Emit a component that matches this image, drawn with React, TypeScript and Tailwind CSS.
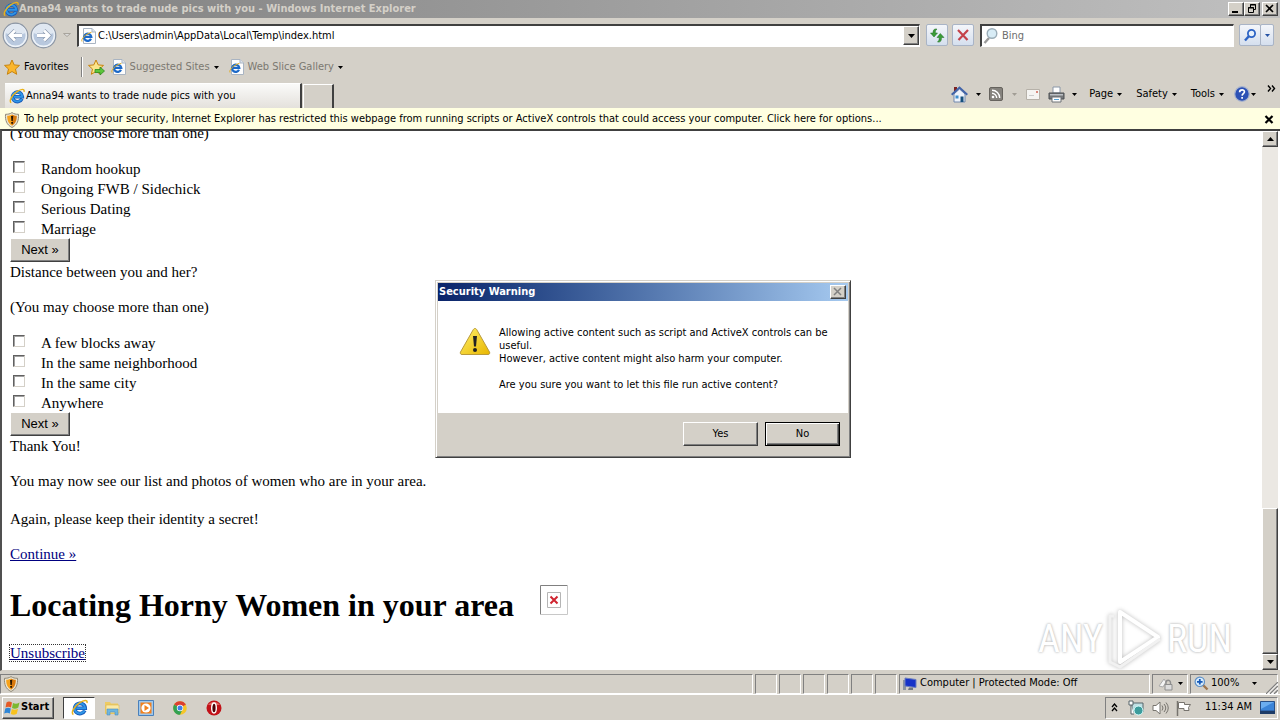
import React from "react";

const UI = "font-['DejaVu_Sans_Condensed','DejaVu_Sans',sans-serif]";
const RAISED =
  "border border-t-white border-l-white border-r-[#404040] border-b-[#404040] bg-[#d4d0c8] shadow-[inset_-1px_-1px_0_#808080]";
const SUNKEN = "border border-t-[#808080] border-l-[#808080] border-r-white border-b-white";

function IeLogo({ size }: { size: number }) {
  return (
    <svg width={size} height={size} viewBox="0 0 16 16" className="shrink-0" aria-hidden="true">
      <path d="M13 10.800A5 4.800 0 1 1 13.400 8.700H4.600" fill="none" stroke="#1659b8" strokeWidth="3.400" />
      <path d="M12.800 10.900A5 4.800 0 1 1 13.300 8.700H5" fill="none" stroke="#2f95e6" strokeWidth="2" />
      <path d="M2.300 14.600C-.6 13.400 3.100 6.800 8 3.600 12.200.9 15.800.3 15 3.800" fill="none" stroke="#e9b21a" strokeWidth="1.400" />
    </svg>
  );
}

function IePage() {
  return (
    <svg width="16" height="16" viewBox="0 0 16 16" className="shrink-0" aria-hidden="true">
      <path d="M2.500.5H11l3.500 3.500v11.500h-12z" fill="#fdfdfd" stroke="#a9b4c2" />
      <path d="M11 .5V4h3.500" fill="#dde5ee" stroke="#a9b4c2" />
      <path d="M10 10.800A3.600 3.600 0 1 1 10.300 8.900H3.700" fill="none" stroke="#1c69c8" strokeWidth="2.200" />
      <path d="M1 13.500C-.3 11.500 4 6 10.500 4.300" fill="none" stroke="#e2ae22" strokeWidth="1" />
    </svg>
  );
}

function Shield() {
  return (
    <svg width="16" height="16" viewBox="0 0 16 16" className="shrink-0" aria-hidden="true">
      <path d="M8 .6C6 2 4 2.300 1.500 2.300c-.3 6 1 10.500 6.500 13.200 5.500-2.700 6.800-7.200 6.500-13.200C12 2.300 10 2 8 .6z" fill="#ece6d4" stroke="#8f8877" />
      <path d="M8 2.500C6.500 3.500 5 3.800 3.200 3.800c0 4.500 1 7.800 4.800 9.900z" fill="#f6a21b" />
      <path d="M8 2.500c1.500 1 3 1.300 4.800 1.300 0 4.500-1 7.800-4.800 9.900z" fill="#d9790c" />
      <path d="M7 4h2.200l-.4 5H7.400zM7.200 10h1.800v1.800H7.200z" fill="#2a1600" />
    </svg>
  );
}

function Star({ arrow = false }: { arrow?: boolean }) {
  return (
    <svg width="17" height="17" viewBox="0 0 17 17" className="shrink-0" aria-hidden="true">
      <path d="M8 1l2.200 4.900 5.300.5-4 3.600 1.200 5.300L8 12.500l-4.700 2.800L4.500 10l-4-3.600 5.300-.5z" fill={arrow ? "#fbe58a" : "#fbb62c"} stroke="#c8840e" strokeWidth="1" />
      {arrow && <path d="M7 10.500h5V8l4.500 4-4.500 4v-2.500H7z" fill="#5cc53b" stroke="#2c8a1e" strokeWidth=".8" />}
    </svg>
  );
}

function Caret({ color = "#000" }: { color?: string }) {
  return (
    <svg width="5" height="3" viewBox="0 0 5 3" className="shrink-0" aria-hidden="true">
      <path d="M0 0h5L2.500 3z" fill={color} />
    </svg>
  );
}

function RoundArrow({ forward = false }: { forward?: boolean }) {
  return (
    <button aria-label={forward ? "Forward" : "Back"} className="h-[27px] w-[27px]">
      <svg width="27" height="27" viewBox="0 0 27 27" aria-hidden="true">
        <circle cx="13.500" cy="13.500" r="12.300" fill="#c9d3e2" stroke="#8d97a5" strokeWidth="1.200" />
        <circle cx="13.500" cy="13.500" r="10.800" fill="#b8c8de" stroke="#edf2f8" strokeWidth="1.400" />
        <path d="M3.500 11a10 9 0 0 1 20 0c-5 2.500-15 2.500-20 0z" fill="#dfe7f1" />
        <path
          d={forward ? "M7 13.500h12M14 8.500l5 5-5 5" : "M20 13.500H8M13 8.500l-5 5 5 5"}
          fill="none" stroke="#8796ad" strokeWidth="4" />
        <path
          d={forward ? "M7 13.500h12M14 8.500l5 5-5 5" : "M20 13.500H8M13 8.500l-5 5 5 5"}
          fill="none" stroke="#fff" strokeWidth="2.800" />
      </svg>
    </button>
  );
}

function TitleBar() {
  return (
    <header className="flex h-[18px] shrink-0 items-center bg-linear-to-r from-[#808080] to-[#c0c0c0] pl-[3px] pr-[2px]">
      <IeLogo size={16} />
      <h1 className="flex-1 truncate text-[11px] font-bold text-[#d4d0c8]">Anna94 wants to trade nude pics with you - Windows Internet Explorer</h1>
      <button aria-label="Minimize" className={`${RAISED} h-[14px] w-4`}>
        <svg width="14" height="12" viewBox="0 0 14 12"><path d="M3 8h6v2H3z" /></svg>
      </button>
      <button aria-label="Restore" className={`${RAISED} mr-[2px] h-[14px] w-4`}>
        <svg width="14" height="12" viewBox="0 0 14 12"><path d="M5.500 4V1.500h5v5H8M5 2h6M3.500 4.500h5v5h-5zM3 5h6" fill="none" stroke="#000" /></svg>
      </button>
      <button aria-label="Close" className={`${RAISED} h-[14px] w-4`}>
        <svg width="14" height="12" viewBox="0 0 14 12"><path d="M3 2l7 7M10 2L3 9" stroke="#000" strokeWidth="1.600" /></svg>
      </button>
    </header>
  );
}

const SOFT = "flex h-[22px] items-center justify-center rounded-[2px] border border-[#a9b4c6] bg-linear-to-b from-[#f4f6fa] to-[#d5dfee]";

function NavBar() {
  return (
    <div className="flex h-[34px] shrink-0 items-center pl-[2px] pr-[6px]">
      <div className="flex gap-px">
        <RoundArrow />
        <RoundArrow forward />
      </div>
      <button aria-label="Recent pages" className="flex w-5 justify-center"><svg width="8" height="4" viewBox="0 0 8 4"><path d="M.5.5h7L4 3.500z" fill="#ddd" stroke="#a8a49c" /></svg></button>
      <div className="flex h-[23px] flex-1 items-center border-t-2 border-l-2 border-r border-b border-t-[#404040] border-l-[#404040] border-r-white border-b-white bg-white">
        <span className="flex w-[19px] justify-center"><IePage /></span>
        <input aria-label="Address" readOnly value="C:\Users\admin\AppData\Local\Temp\index.html" className="min-w-0 flex-1 bg-transparent pt-[2px] text-[11px] outline-none" />
        <button aria-label="Show address history" className={`${RAISED} flex h-[19px] w-4 items-center justify-center`}>
          <svg width="7" height="4" viewBox="0 0 7 4"><path d="M0 0h7L3.500 4z" /></svg>
        </button>
      </div>
      <button aria-label="Refresh" className={`${SOFT} ml-[6px] w-[22px]`}>
        <svg width="16" height="16" viewBox="0 0 16 16"><path d="M8 2C5 1.500 4 3 4 6H1.500L5 10l3.500-4H6.300C6.300 4 6.500 3.500 8 2z" fill="#3b9c37" stroke="#1f6d24" strokeWidth=".5" /><path d="M8.500 15c3 .5 4-1 4-4.500H15L11.300 6.500 8 10.500h2.200c0 2.500-.2 3-1.700 4.500z" fill="#3b9c37" stroke="#1f6d24" strokeWidth=".5" /></svg>
      </button>
      <button aria-label="Stop" className={`${SOFT} ml-1 w-[22px]`}>
        <svg width="14" height="14" viewBox="0 0 14 14"><path d="M2 2l9.500 10M12 2L2.500 12" stroke="#c4424a" strokeWidth="2.200" /></svg>
      </button>
      <div className="ml-[6px] flex h-[23px] w-[254px] items-center border-t-2 border-l-2 border-r border-b border-t-[#404040] border-l-[#404040] border-r-white border-b-white bg-white">
        <svg width="18" height="18" viewBox="0 0 18 18" className="shrink-0"><path d="M7 11l-4.500 5" stroke="#9a9a9a" strokeWidth="2.400" /><circle cx="10" cy="6.500" r="4.800" fill="#d8ecf6" stroke="#9badb8" strokeWidth="1.400" /></svg>
        <input aria-label="Search" placeholder="Bing" className="min-w-0 flex-1 bg-transparent pt-[2px] pl-[2px] text-[11px] outline-none placeholder:text-[#6d6d6d]" />
      </div>
      <button aria-label="Go" className={`${SOFT} ml-[5px] w-[22px]`}>
        <svg width="14" height="14" viewBox="0 0 14 14"><path d="M6 8l-4 4.500" stroke="#2b62c4" strokeWidth="2.400" /><circle cx="8.500" cy="5.500" r="3.600" fill="#e6f0fb" stroke="#2b62c4" strokeWidth="1.800" /></svg>
      </button>
      <button aria-label="Search options" className={`${SOFT} -ml-px w-[14px]`}><Caret color="#2452a4" /></button>
    </div>
  );
}

function FavoritesBar() {
  return (
    <div className="flex h-[30px] shrink-0 items-center pl-1 text-[11px]">
      <button className="flex items-center gap-[3px]"><Star />Favorites</button>
      <span className="ml-3 mr-[5px] h-5 w-[2px] border-l border-[#808080] bg-white" />
      <button aria-label="Add to Favorites Bar" className="mr-[6px]"><Star arrow /></button>
      <button className="mr-[10px] flex items-center gap-[3px] text-[#7b7871]"><IePage />Suggested Sites<span className="ml-px"><Caret /></span></button>
      <button className="flex items-center gap-[3px] text-[#7b7871]"><IePage />Web Slice Gallery<span className="ml-px"><Caret /></span></button>
    </div>
  );
}

function CommandBar() {
  return (
    <div className="mb-[2px] flex h-6 items-center text-[11px]">
      <button aria-label="Home" className="flex items-center gap-2">
        <svg width="17" height="17" viewBox="0 0 17 17"><path d="M3 8v8h11V8L8.500 3z" fill="#eef3fb" stroke="#7187ad" /><path d="M3 1h3v4H3z" fill="#7d2222" /><path d="M.7 8.700L8.500 1.500l7.800 7.200" fill="none" stroke="#4163a9" strokeWidth="2" /><path d="M9.500 10.500h3V16h-3z" fill="#164f7d" /><path d="M4.500 9.500h3v3h-3z" fill="#3f8fce" /></svg>
        <Caret />
      </button>
      <button aria-label="Feeds" className="ml-2 flex items-center gap-[9px]">
        <svg width="14" height="14" viewBox="0 0 14 14"><rect x=".5" y=".5" width="13" height="13" rx="1.500" fill="#85827d" stroke="#66635e" /><circle cx="4" cy="10" r="1.300" fill="#fff" /><path d="M3 6.300A4.700 4.700 0 0 1 7.700 11M3 3.300A7.700 7.700 0 0 1 10.700 11" fill="none" stroke="#fff" strokeWidth="1.400" /></svg>
        <Caret color="#a19d95" />
      </button>
      <button aria-label="Read mail" className="ml-[9px]">
        <svg width="14" height="11" viewBox="0 0 14 11"><path d="M.5.5h13v10H.5z" fill="#f5f4f2" stroke="#b6b1a9" /><path d="M10 2h2v2h-2z" fill="#d9877c" /><path d="M3 6.500h5" stroke="#ccc" /></svg>
      </button>
      <button aria-label="Print" className="ml-2 flex items-center gap-[7px]">
        <svg width="17" height="17" viewBox="0 0 17 17"><path d="M5 1h7v6H5z" fill="#fff" stroke="#8a97a8" /><path d="M1 7h15v6H1z" fill="#76787b" stroke="#4b4e52" /><path d="M2 8h13v1.500H2z" fill="#bcc0c5" /><path d="M4 11h9v5H4z" fill="#fdfdfd" stroke="#6e7277" /><path d="M6 13.500h5" stroke="#58a3d4" /></svg>
        <Caret />
      </button>
      <button className="ml-3 flex items-center gap-1">Page<Caret /></button>
      <button className="ml-[14px] flex items-center gap-1">Safety<Caret /></button>
      <button className="ml-[14px] flex items-center gap-1">Tools<Caret /></button>
      <button aria-label="Help" className="ml-[10px] flex items-center gap-px">
        <svg width="16" height="16" viewBox="0 0 16 16"><circle cx="8" cy="8" r="7.300" fill="#2c51b5" stroke="#a9b4cd" strokeWidth="1.200" /><path d="M5.600 6.300C5.700 3 10.600 3.300 10.400 6c-.1 1.600-2.200 1.700-2.300 3.600M8.100 11v1.800" fill="none" stroke="#fff" strokeWidth="1.700" /></svg>
        <Caret />
      </button>
      <button aria-label="More commands" className="mb-3 ml-[11px]">
        <svg width="9" height="7" viewBox="0 0 9 7"><path d="M1 .5l2.500 3L1 6.500M5 .5l2.500 3L5 6.500" fill="none" stroke="#000" strokeWidth="1.400" /></svg>
      </button>
    </div>
  );
}

function TabRow() {
  return (
    <div className="flex h-[26px] shrink-0 items-end justify-between pl-[5px] pr-1">
      <div className="flex items-end">
        <button className="flex h-[25px] w-[297px] items-center gap-px border-t border-r-2 border-t-white border-r-[#404040] bg-linear-to-b from-[#fafaf9] to-[#e4e1dc] pl-1 text-left text-[11px]">
          <IeLogo size={16} />Anna94 wants to trade nude pics with you
        </button>
        <button aria-label="New tab" className="ml-px h-6 w-[31px] border-t border-r-2 border-l border-t-white border-r-[#404040] border-l-white" />
      </div>
      <CommandBar />
    </div>
  );
}

function InfoBar() {
  return (
    <div className="flex h-[21px] shrink-0 items-center gap-1 bg-[#ffffe1] pt-[2px] pl-1 pr-[6px] text-[11px]">
      <Shield />
      <button className="flex-1 truncate text-left">To help protect your security, Internet Explorer has restricted this webpage from running scripts or ActiveX controls that could access your computer. Click here for options...</button>
      <button aria-label="Close information bar"><svg width="10" height="9" viewBox="0 0 10 9"><path d="M1.500 1l7 7M8.500 1l-7 7" stroke="#000" strokeWidth="2.200" /></svg></button>
    </div>
  );
}

function Choices({ items }: { items: string[] }) {
  return (
    <div>
      {items.map((item) => (
        <label key={item} className="flex h-5 items-center">
          <input type="checkbox" className="mr-4 mb-[3px] ml-[3px] h-3 w-3 appearance-none border border-t-[#606060] border-l-[#606060] border-r-[#d4d0c8] border-b-[#d4d0c8] bg-white shadow-[inset_1px_1px_0_#a0a0a0]" />
          <span className="pt-[2px]">{item}</span>
        </label>
      ))}
      <button className={`${RAISED} block h-6 w-[60px] font-['Liberation_Sans',sans-serif] text-[13px] leading-[22px]`}>Next »</button>
    </div>
  );
}

function Watermark() {
  return (
    <div className="absolute right-[30px] bottom-0 flex items-center gap-[3px] font-['Liberation_Sans_Narrow','Roboto_Condensed','Liberation_Sans',sans-serif] text-[38px] leading-[60px] text-white [text-shadow:0_0_3px_#bbb,0_0_2px_#ccc]">
      <span>ANY</span>
      <svg width="58" height="62" viewBox="0 0 58 62" aria-hidden="true" className="drop-shadow-[0_0_2px_#bbb]">
        <path d="M14 4v50l38-25z" fill="none" stroke="#fff" strokeWidth="4" strokeLinejoin="round" />
        <path d="M8 8H4v46l10 5 40-28" fill="none" stroke="#f1f1f1" strokeWidth="3" strokeLinejoin="round" />
      </svg>
      <span>RUN</span>
    </div>
  );
}

function Document() {
  return (
    <div className="flex min-h-0 flex-1 border-t-2 border-l-2 border-b border-t-[#404040] border-l-[#505050] border-b-[#d4d0c8] bg-white pr-[2px]">
      <main className="relative flex min-w-0 flex-1 flex-col justify-end overflow-hidden pb-[7px] pl-2 font-['Liberation_Serif',serif] text-[15px] leading-[20px]">
        <p className="mb-[15px]">(You may choose more than one)</p>
        <Choices items={["Random hookup", "Ongoing FWB / Sidechick", "Serious Dating", "Marriage"]} />
        <p className="mb-[15px]">Distance between you and her?</p>
        <p className="mb-[15px]">(You may choose more than one)</p>
        <Choices items={["A few blocks away", "In the same neighborhood", "In the same city", "Anywhere"]} />
        <p className="mb-[15px]">Thank You!</p>
        <p className="mb-[18px]">You may now see our list and photos of women who are in your area.</p>
        <p className="mb-[15px]">Again, please keep their identity a secret!</p>
        <p className="mb-[21px]"><a href="#continue" className="text-[#000080] underline">Continue »</a></p>
        <h2 className="mb-[18px] flex h-10 items-center gap-[26px] text-[32px] font-bold">
          Locating Horny Women in your area
          <svg role="img" aria-label="Missing picture" width="28" height="30" viewBox="0 0 28 30" className="mb-[10px]">
            <path d="M.5 29.500V.5h27" fill="none" stroke="#808080" /><path d="M27.500.5v29H.5" fill="none" stroke="#c8c8c8" />
            <path d="M7.500 7.500h13v15h-13z" fill="#fff" stroke="#b5b5b5" /><path d="M10.500 11.500l7 7M17.500 11.500l-7 7" stroke="#d02530" strokeWidth="2" />
          </svg>
        </h2>
        <p><a href="#unsubscribe" className="text-[#000080] underline outline-1 outline-dotted outline-[#333]">Unsubscribe</a></p>
        <Watermark />
      </main>
      <div className="flex w-4 shrink-0 flex-col bg-[#ebe8e3]">
        <button aria-label="Scroll up" className={`${RAISED} flex h-4 w-4 items-center justify-center`}><svg width="7" height="4" viewBox="0 0 7 4"><path d="M0 4h7L3.500 0z" /></svg></button>
        <div className="flex-1" />
        <div className={`${RAISED} h-[146px]`} />
        <button aria-label="Scroll down" className={`${RAISED} flex h-4 w-4 items-center justify-center`}><svg width="7" height="4" viewBox="0 0 7 4"><path d="M0 0h7L3.500 4z" /></svg></button>
      </div>
    </div>
  );
}

function StatusBar() {
  return (
    <div className="flex h-[23px] shrink-0 items-center gap-[2px] pt-[2px] pr-[2px] text-[11px]">
      <div className={`${SUNKEN} flex h-5 flex-1 items-center pl-[2px]`}><Shield /></div>
      {[0, 1, 2, 3, 4, 5].map((n) => <div key={n} className={`${SUNKEN} h-5 w-[22px]`} />)}
      <div className={`${SUNKEN} flex h-5 w-[251px] items-center gap-[3px] pl-[2px]`}>
        <svg width="15" height="16" viewBox="0 0 15 16"><path d="M1 4h3v10H1z" fill="#8b949f" /><path d="M3 2l11 1.500v8L3 10z" fill="#1632c8" stroke="#6c7ec0" /><path d="M7 11.500h4V14H6z" fill="#707783" /></svg>
        Computer | Protected Mode: Off
      </div>
      <button aria-label="Security report" className={`${SUNKEN} flex h-5 w-9 items-center justify-center gap-1`}>
        <svg width="16" height="16" viewBox="0 0 16 16"><path d="M1 10L6 3l2 3-3 5z" fill="#f4f4f4" stroke="#aaa" /><path d="M8 8.500V6.500a2.200 2.200 0 0 1 4.500 0v2" fill="none" stroke="#8e8e8e" strokeWidth="1.400" /><path d="M7 8.500h7v5.500H7z" fill="#ddd" stroke="#8e8e8e" /></svg>
        <Caret />
      </button>
      <button className={`${SUNKEN} flex h-5 w-[88px] items-center gap-[2px] pl-[3px]`}>
        <svg width="15" height="15" viewBox="0 0 15 15"><path d="M8.500 8.500l5 5" stroke="#a0764d" strokeWidth="2.400" /><circle cx="5.800" cy="5.800" r="4.700" fill="#d8ecfc" stroke="#5f90c6" strokeWidth="1.200" /><path d="M5.800 3v5.600M3 5.800h5.600" stroke="#1659b8" strokeWidth="1.800" /></svg>
        <span className="flex-1 text-left">100%</span>
        <span className="flex pr-5"><Caret /></span>
      </button>
      <svg width="12" height="12" viewBox="0 0 12 12" className="-ml-[14px] self-end"><path d="M0 12L12 0M4 12l8-8M8 12l4-4" stroke="#808080" strokeWidth="1.300" /><path d="M1.500 12L12 1.500M5.500 12L12 5.500" stroke="#fff" /></svg>
    </div>
  );
}

function Taskbar() {
  return (
    <footer className="flex h-[26px] shrink-0 items-center border-t border-white pr-[2px] pl-[2px] text-[11px]">
      <button className={`${RAISED} flex h-[22px] w-[52px] items-center gap-px pl-px font-bold`}>
        <svg width="16" height="16" viewBox="0 0 16 16"><path d="M2.500 2.500C4.500 1 6 1.500 8 2.500L7 7.500C5 6.500 3.500 6.500 1.500 7.500z" fill="#e55a26" /><path d="M9 3c2 1 4 1 6.500-.5l-1.200 5C12 9 10 9 8 8z" fill="#7cb82f" /><path d="M1.300 8.500c2-1 3.500-1 5.500 0l-1 5C4 12.500 2.300 12.500.2 13.500z" fill="#2f86d6" /><path d="M7.800 9c2 1 4 1 6.200-.3l-1.200 5c-2 1.300-4 1.300-6 .3z" fill="#f8c21d" /></svg>
        Start
      </button>
      <div className="ml-[9px] flex items-center">
        <button aria-label="Internet Explorer" className="flex h-[22px] w-8 items-center justify-center border border-t-[#404040] border-l-[#404040] border-r-white border-b-white bg-white"><IeLogo size={17} /></button>
        <button aria-label="Windows Explorer" className="flex h-[22px] w-[34px] items-center justify-center">
          <svg width="16" height="16" viewBox="0 0 16 16"><path d="M1 2h5l1 1.500h7V14H1z" fill="#eecb63" /><path d="M2 5h13v8H2z" fill="#fbe9a4" stroke="#d9b652" strokeWidth=".6" /><path d="M3 9h11v6h-3v-3H6v3H3z" fill="#6fb6df" stroke="#4a8fc0" strokeWidth=".6" /></svg>
        </button>
        <button aria-label="Media Player" className="flex h-[22px] w-[34px] items-center justify-center">
          <svg width="16" height="16" viewBox="0 0 16 16"><path d="M.5.5h15v15H.5z" fill="#9fc8ec" stroke="#4a80bb" /><path d="M2.500 2.500h11v11h-11z" fill="#f2811d" /><circle cx="8" cy="8" r="4.600" fill="#fff" /><path d="M6.500 5l4.500 3-4.500 3z" fill="#f2811d" /></svg>
        </button>
        <button aria-label="Chrome" className="flex h-[22px] w-[34px] items-center justify-center">
          <svg width="14" height="14" viewBox="0 0 14 14"><circle cx="7" cy="7" r="6.800" fill="#f6c62a" /><path d="M7 7L1.100 3.600A6.800 6.800 0 0 1 12.900 3.600z" fill="#db3f31" /><path d="M7 7L1.100 3.600A6.800 6.800 0 0 0 7 13.800L9.500 8.500z" fill="#33a152" /><circle cx="7" cy="7" r="3.200" fill="#fff" /><circle cx="7" cy="7" r="2.500" fill="#3f7fe8" /></svg>
        </button>
        <button aria-label="Opera" className="flex h-[22px] w-[34px] items-center justify-center">
          <svg width="16" height="16" viewBox="0 0 16 16"><circle cx="8" cy="8" r="7.500" fill="#c21118" /><path d="M2 5a7 6 0 0 1 12 0z" fill="#e0605c" /><ellipse cx="8" cy="8" rx="2.300" ry="5" fill="#4d0206" stroke="#fff" strokeWidth="1.400" /></svg>
        </button>
      </div>
      <div className={`${SUNKEN} ml-auto flex h-[22px] items-center pr-[2px] pl-[5px]`}>
        <button aria-label="Show hidden icons"><svg width="7" height="9" viewBox="0 0 7 9"><path d="M1 4l2.500-3L6 4M1 8l2.500-3L6 8" fill="none" stroke="#000" strokeWidth="1.300" /></svg></button>
        <svg width="16" height="16" viewBox="0 0 16 16" className="ml-[10px]"><path d="M4 3h11v9H4z" fill="#bfe0e4" stroke="#56646b" /><circle cx="10.500" cy="10.500" r="4.500" fill="#3d9c9c" stroke="#dff" /><path d="M1 1h4v4H1zM3 5v9h3" fill="#fff" stroke="#56646b" /></svg>
        <svg width="17" height="16" viewBox="0 0 17 16" className="ml-2"><path d="M1 5.500h3L8 2v12l-4-3.500H1z" fill="#fff" stroke="#77746e" /><path d="M10 5.500q2 2.500 0 5M12 4q3.500 4 0 8M14 2.500q4.500 5.500 0 11" fill="none" stroke="#77746e" /></svg>
        <svg width="16" height="16" viewBox="0 0 16 16" className="ml-[7px]"><path d="M1.500 1v15" stroke="#77746e" strokeWidth="1.500" /><path d="M2.500 2.500h6v2h6l-2 3 .5 3H8v-2H2.500z" fill="#fff" stroke="#77746e" /></svg>
        <time className="ml-[13px]">11:34 AM</time>
        <button aria-label="Show desktop" className="ml-2"><svg width="15" height="14" viewBox="0 0 15 14"><path d="M.5.5h14v9.500H.5z" fill="#3b84d8" stroke="#284f86" /><path d="M1 1h13L1 8z" fill="#6badf0" /><path d="M0 10h15v3H0z" fill="#1d3b66" /></svg></button>
      </div>
    </footer>
  );
}

function SecurityDialog() {
  const action = "h-6 bg-[#d4d0c8] text-center";
  return (
    <section role="dialog" aria-labelledby="warning-title" className="absolute top-[280px] left-[435px] w-[416px] border border-t-[#d4d0c8] border-l-[#d4d0c8] border-r-[#404040] border-b-[#404040] bg-[#d4d0c8] p-[2px] text-[11px] shadow-[inset_1px_1px_0_#fff,inset_-1px_-1px_0_#808080]">
      <div className="flex h-[18px] items-center justify-between bg-linear-to-r from-[#0a246a] to-[#a6caf0] pr-[2px] pl-px">
        <h2 id="warning-title" className="font-bold text-white">Security Warning</h2>
        <button aria-label="Close" className={`${RAISED} h-[14px] w-4`}><svg width="14" height="12" viewBox="0 0 14 12"><path d="M3 2l7 7M10 2L3 9" stroke="#808080" strokeWidth="1.500" /></svg></button>
      </div>
      <div className="flex h-28 gap-2 bg-white pt-[25px] pr-3 pl-[21px] leading-[13px]">
        <svg width="32" height="32" viewBox="0 0 32 32" className="shrink-0">
          <defs><linearGradient id="caution" x2="1" y2="1"><stop stopColor="#fff06a" /><stop offset="1" stopColor="#e8b600" /></linearGradient></defs>
          <path d="M16 2.500c1 0 1.500.7 2 1.600L30.500 26c.7 1.300 0 2.500-1.500 2.500H3c-1.500 0-2.200-1.200-1.500-2.500L14 4.100c.5-.9 1-1.600 2-1.600z" fill="url(#caution)" stroke="#b99a3c" />
          <path d="M14 10h4l-1 10.500h-2z" fill="#222" /><circle cx="16" cy="24" r="2" fill="#222" />
        </svg>
        <div>
          <p>Allowing active content such as script and ActiveX controls can be useful.</p>
          <p className="mb-[13px]">However, active content might also harm your computer.</p>
          <p>Are you sure you want to let this file run active content?</p>
        </div>
      </div>
      <div className="flex h-[42px] items-center justify-end gap-[7px] pr-2">
        <button className={`${RAISED} ${action} w-[75px]`}>Yes</button>
        <button className={`${action} w-[75px] border border-black shadow-[inset_1px_1px_0_#fff,inset_-1px_-1px_0_#404040,inset_-2px_-2px_0_#808080]`}>No</button>
      </div>
    </section>
  );
}

export default function App() {
  return (
    <div className={`${UI} relative flex h-screen flex-col overflow-hidden bg-[#d4d0c8] text-black`}>
      <TitleBar />
      <NavBar />
      <FavoritesBar />
      <TabRow />
      <InfoBar />
      <Document />
      <StatusBar />
      <Taskbar />
      <SecurityDialog />
    </div>
  );
}
